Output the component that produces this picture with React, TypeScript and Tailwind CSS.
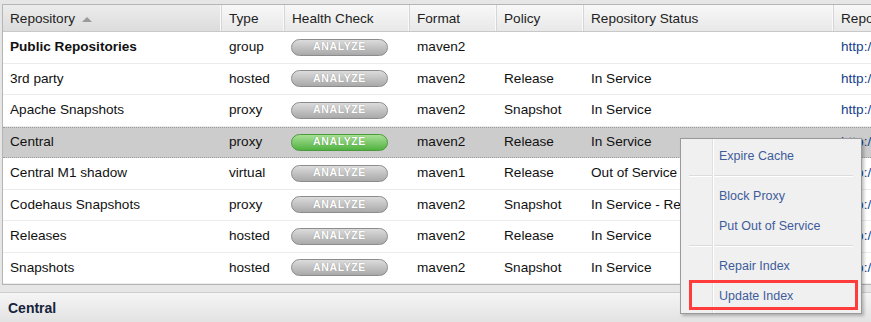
import React from "react";

type Row = {
  name: string;
  type: string;
  format: string;
  policy: string;
  status: string;
  bold?: boolean;
  selected?: boolean;
};

const rows: Row[] = [
  { name: "Public Repositories", type: "group", format: "maven2", policy: "", status: "", bold: true },
  { name: "3rd party", type: "hosted", format: "maven2", policy: "Release", status: "In Service" },
  { name: "Apache Snapshots", type: "proxy", format: "maven2", policy: "Snapshot", status: "In Service" },
  { name: "Central", type: "proxy", format: "maven2", policy: "Release", status: "In Service", selected: true },
  { name: "Central M1 shadow", type: "virtual", format: "maven1", policy: "Release", status: "Out of Service" },
  { name: "Codehaus Snapshots", type: "proxy", format: "maven2", policy: "Snapshot", status: "In Service - Remote Automatically Blocked and Available" },
  { name: "Releases", type: "hosted", format: "maven2", policy: "Release", status: "In Service" },
  { name: "Snapshots", type: "hosted", format: "maven2", policy: "Snapshot", status: "In Service" },
];

// column widths, left to right
const cols = ["w-[219px]", "w-[63px]", "w-[125px]", "w-[87px]", "w-[87px]", "w-[250px]"];

function Analyze({ green }: { green?: boolean }) {
  return (
    <div
      className={
        "flex h-[17px] w-[97px] items-center justify-center rounded-full border text-[10.5px] font-bold tracking-[0.6px] text-white " +
        (green
          ? "border-[#4a9a3c] bg-gradient-to-b from-[#a8e094] to-[#4fb23f] [text-shadow:0_0_1px_#3a8a2c]"
          : "border-[#8c8c8c] bg-gradient-to-b from-[#dcdcdc] to-[#a9a9a9] [text-shadow:0_0_1px_#8a8a8a]")
      }
    >
      ANALYZE
    </div>
  );
}

function HeaderCell({ label, w, sorted }: { label: string; w: string; sorted?: boolean }) {
  return (
    <div
      className={
        "flex h-full shrink-0 items-center gap-[7px] border-r border-r-[#d6d6d6] pt-[2px] pl-[7px] shadow-[inset_-1px_0_0_#fafafa] " +
        w +
        (sorted ? " bg-gradient-to-b from-[#ececec] to-[#dcdcdc]" : "")
      }
    >
      <span>{label}</span>
      {sorted && <span className="mt-[1px] h-0 w-0 border-x-[5px] border-b-[5px] border-x-transparent border-b-[#9a9a9a]" />}
    </div>
  );
}

function MenuItem({ label, marked }: { label: string; marked?: boolean }) {
  return (
    <div className="relative flex h-[30px] items-center pl-[38px]">
      {label}
      {marked && <div className="absolute left-[8px] right-[3px] top-[-1px] bottom-[1px] border-[3px] border-[#ff3b3b]" />}
    </div>
  );
}

function Sep() {
  return (
    <div className="flex h-[10px] items-center px-[8px]">
      <div className="h-[2px] w-full border-t border-t-[#dcdcdc] border-b border-b-white" />
    </div>
  );
}

export default function App() {
  return (
    <div className="relative h-[322px] w-[871px] overflow-hidden bg-[#e6e6e6] font-['Liberation_Sans',Arial,sans-serif] text-[13.6px] text-[#111]">
      <div className="pt-[4px] pl-[2px]">
        <div className="overflow-hidden border-l border-t border-b border-[#b5b5b5] bg-white">
          <div className="flex h-[27px] border-b border-b-[#c8c8c8] bg-gradient-to-b from-[#f8f8f8] to-[#e8e8e8] text-[#222]">
            <HeaderCell label="Repository" w={cols[0]} sorted />
            <HeaderCell label="Type" w={cols[1]} />
            <HeaderCell label="Health Check" w={cols[2]} />
            <HeaderCell label="Format" w={cols[3]} />
            <HeaderCell label="Policy" w={cols[4]} />
            <HeaderCell label="Repository Status" w={cols[5]} />
            <div className="flex h-full flex-1 items-center whitespace-nowrap pt-[2px] pl-[7px]">Repository Path</div>
          </div>
          {rows.map((r) => (
            <div
              key={r.name}
              className={
                "flex h-[31.5px] items-center whitespace-nowrap " +
                (r.selected
                  ? "border-y border-dotted border-y-[#9c9c9c] bg-[#cccccc]"
                  : "border-b border-b-[#ececec]")
              }
            >
              <div className={"shrink-0 pl-[7px] " + cols[0] + (r.bold ? " font-bold" : "")}>{r.name}</div>
              <div className={"shrink-0 pl-[7px] " + cols[1]}>{r.type}</div>
              <div className={"shrink-0 pl-[6px] " + cols[2]}>
                <Analyze green={r.selected} />
              </div>
              <div className={"shrink-0 pl-[7px] " + cols[3]}>{r.format}</div>
              <div className={"shrink-0 pl-[7px] " + cols[4]}>{r.policy}</div>
              <div className={"shrink-0 overflow-hidden pl-[7px] " + cols[5]}>{r.status}</div>
              <div className="flex-1 pl-[7px] text-[#15428b]">http://localhost</div>
            </div>
          ))}
        </div>
      </div>
      <div className="mt-[7px] flex h-[31px] items-center border-t border-t-[#cfcfcf] bg-gradient-to-b from-[#f5f5f5] to-[#e2e2e2] pl-[8px] text-[14px] font-bold text-[#15233a]">
        Central
      </div>

      <div className="absolute left-[680px] top-[138px] w-[182px] border border-[#9a9a9a] bg-[#f0f0f0] py-[2px] text-[12.5px] text-[#3f5c9a] shadow-[2px_2px_3px_rgba(0,0,0,0.25)]">
        <div className="absolute top-0 bottom-0 left-[31px] w-[2px] border-l border-l-[#e0e0e0] border-r border-r-white" />
        <MenuItem label="Expire Cache" />
        <Sep />
        <MenuItem label="Block Proxy" />
        <MenuItem label="Put Out of Service" />
        <Sep />
        <MenuItem label="Repair Index" />
        <MenuItem label="Update Index" marked />
      </div>
    </div>
  );
}
